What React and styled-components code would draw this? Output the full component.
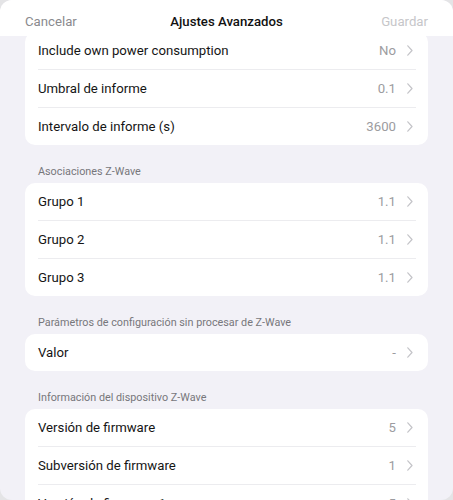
import React from "react";
import styled, { createGlobalStyle } from "styled-components";

const GlobalStyle = createGlobalStyle`
  html, body {
    margin: 0;
    padding: 0;
    background: #e4e4e6;
    font-family: Roboto, "Noto Sans", "Liberation Sans", sans-serif;
    -webkit-font-smoothing: antialiased;
  }
`;

const Sheet = styled.div`
  width: 453px;
  height: 500px;
  background: #f2f1f7;
  border-radius: 12px;
  overflow: hidden;
  display: flex;
  flex-direction: column;
`;

const Header = styled.header`
  position: relative;
  z-index: 1;
  flex: none;
  height: 36px;
  padding: 8px 25px 0;
  box-sizing: border-box;
  background: #fff;
  display: grid;
  grid-template-columns: 1fr auto 1fr;
  align-items: start;
  font-size: 13.2px;
  line-height: 28px;
`;

const HeaderButton = styled.span`
  color: ${(p) => (p.$disabled ? "#c6c6c9" : "#8a8a8e")};
  justify-self: ${(p) => (p.$end ? "end" : "start")};
`;

const Title = styled.span`
  color: #111;
  font-weight: 500;
`;

const Body = styled.div`
  flex: 1;
  overflow: hidden;
  padding: 0 25px;
  margin-top: -4px;
`;

const Section = styled.section`
  & + & {
    margin-top: 20px;
  }
`;

const Label = styled.div`
  font-size: 10.8px;
  line-height: 14px;
  color: #77777b;
  padding: 0 13px 4px;
`;

const Card = styled.div`
  background: #fff;
  border-radius: 10px;
  overflow: hidden;
`;

const Row = styled.div`
  height: 37px;
  display: flex;
  align-items: center;
  padding: 0 15px 0 13px;
  font-size: 13.2px;
  color: #151515;
  position: relative;

  & + & {
    border-top: 1px solid transparent;
  }
  & + &::before {
    content: "";
    position: absolute;
    left: 13px;
    right: 12px;
    top: -1px;
    height: 1px;
    background: #ececef;
  }
`;

const Name = styled.span`
  flex: 1;
  white-space: nowrap;
`;

const Value = styled.span`
  color: #9c9ca0;
  margin-right: 11px;
`;

const Chevron = () => (
  <svg width="6" height="11" viewBox="0 0 6 11" fill="none">
    <path d="M0.8 0.8 L5 5.5 L0.8 10.2" stroke="#c4c4c8" strokeWidth="1.2" strokeLinecap="round" strokeLinejoin="round" />
  </svg>
);

const sections = [
  {
    rows: [
      ["Include own power consumption", "No"],
      ["Umbral de informe", "0.1"],
      ["Intervalo de informe (s)", "3600"],
    ],
  },
  {
    label: "Asociaciones Z-Wave",
    rows: [
      ["Grupo 1", "1.1"],
      ["Grupo 2", "1.1"],
      ["Grupo 3", "1.1"],
    ],
  },
  {
    label: "Parámetros de configuración sin procesar de Z-Wave",
    rows: [["Valor", "-"]],
  },
  {
    label: "Información del dispositivo Z-Wave",
    rows: [
      ["Versión de firmware", "5"],
      ["Subversión de firmware", "1"],
      ["Versión de firmware 1", "5"],
    ],
  },
];

export default function App() {
  return (
    <>
      <GlobalStyle />
      <Sheet>
        <Header>
          <HeaderButton>Cancelar</HeaderButton>
          <Title>Ajustes Avanzados</Title>
          <HeaderButton $end $disabled>
            Guardar
          </HeaderButton>
        </Header>
        <Body>
          {sections.map((s, i) => (
            <Section key={i}>
              {s.label && <Label>{s.label}</Label>}
              <Card>
                {s.rows.map(([name, value]) => (
                  <Row key={name}>
                    <Name>{name}</Name>
                    <Value>{value}</Value>
                    <Chevron />
                  </Row>
                ))}
              </Card>
            </Section>
          ))}
        </Body>
      </Sheet>
    </>
  );
}
